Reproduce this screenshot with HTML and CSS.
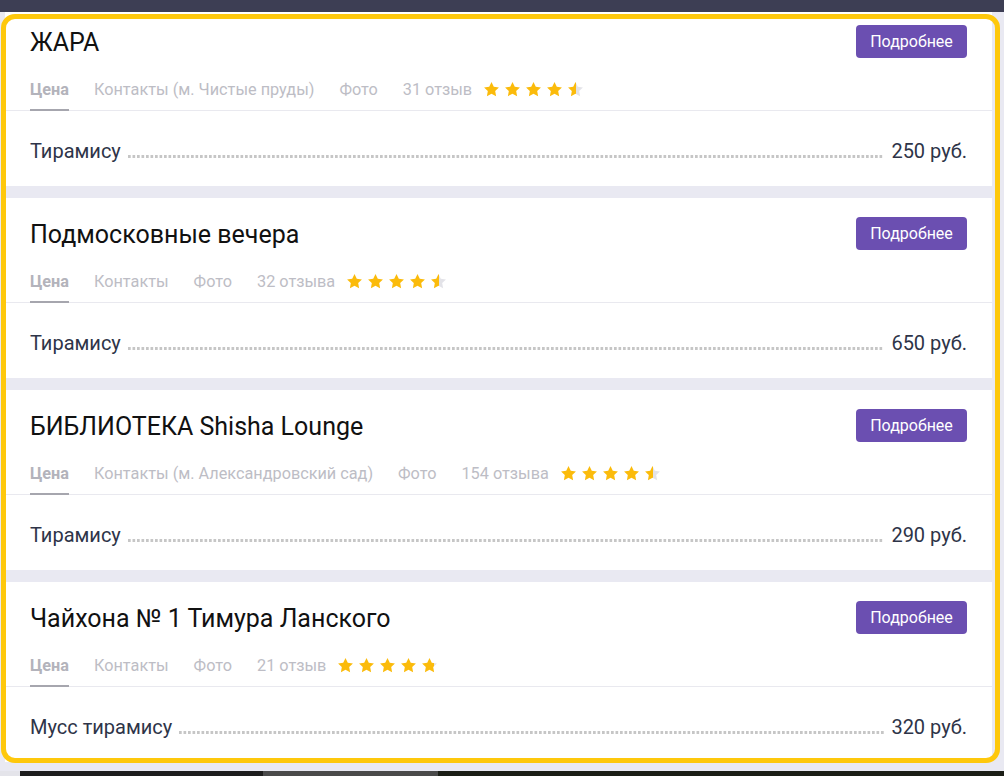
FILE: index.html
```html
<!DOCTYPE html>
<html lang="ru">
<head>
<meta charset="utf-8">
<title>Тирамису</title>
<link rel="stylesheet" href="styles.css">
</head>
<body>
<div class="topbar"></div>
<main class="list">
  <section class="card">
    <div class="head">
      <h2 class="title">ЖАРА</h2>
      <a class="btn" href="#">Подробнее</a>
    </div>
    <nav class="tabs">
      <span class="tab active">Цена</span>
      <span class="tab">Контакты (м. Чистые пруды)</span>
      <span class="tab">Фото</span>
      <span class="tab">31 отзыв</span>
      <span class="stars">
        <svg viewBox="0 0 24 24"><path d="M12 1.5l3.2 6.6 7.3 1-5.3 5.1 1.3 7.2L12 18l-6.5 3.4 1.3-7.2L1.5 9.1l7.3-1z"/></svg>
        <svg viewBox="0 0 24 24"><path d="M12 1.5l3.2 6.6 7.3 1-5.3 5.1 1.3 7.2L12 18l-6.5 3.4 1.3-7.2L1.5 9.1l7.3-1z"/></svg>
        <svg viewBox="0 0 24 24"><path d="M12 1.5l3.2 6.6 7.3 1-5.3 5.1 1.3 7.2L12 18l-6.5 3.4 1.3-7.2L1.5 9.1l7.3-1z"/></svg>
        <svg viewBox="0 0 24 24"><path d="M12 1.5l3.2 6.6 7.3 1-5.3 5.1 1.3 7.2L12 18l-6.5 3.4 1.3-7.2L1.5 9.1l7.3-1z"/></svg>
        <svg viewBox="0 0 24 24"><defs><linearGradient id="h1"><stop offset="0.55" stop-color="#fbbb0b"/><stop offset="0.55" stop-color="#e3e3e8"/></linearGradient></defs><path fill="url(#h1)" d="M12 1.5l3.2 6.6 7.3 1-5.3 5.1 1.3 7.2L12 18l-6.5 3.4 1.3-7.2L1.5 9.1l7.3-1z"/></svg>
      </span>
    </nav>
    <div class="row">
      <span class="dish">Тирамису</span>
      <span class="leader"></span>
      <span class="price">250 руб.</span>
    </div>
  </section>

  <section class="card">
    <div class="head">
      <h2 class="title">Подмосковные вечера</h2>
      <a class="btn" href="#">Подробнее</a>
    </div>
    <nav class="tabs">
      <span class="tab active">Цена</span>
      <span class="tab">Контакты</span>
      <span class="tab">Фото</span>
      <span class="tab">32 отзыва</span>
      <span class="stars">
        <svg viewBox="0 0 24 24"><path d="M12 1.5l3.2 6.6 7.3 1-5.3 5.1 1.3 7.2L12 18l-6.5 3.4 1.3-7.2L1.5 9.1l7.3-1z"/></svg>
        <svg viewBox="0 0 24 24"><path d="M12 1.5l3.2 6.6 7.3 1-5.3 5.1 1.3 7.2L12 18l-6.5 3.4 1.3-7.2L1.5 9.1l7.3-1z"/></svg>
        <svg viewBox="0 0 24 24"><path d="M12 1.5l3.2 6.6 7.3 1-5.3 5.1 1.3 7.2L12 18l-6.5 3.4 1.3-7.2L1.5 9.1l7.3-1z"/></svg>
        <svg viewBox="0 0 24 24"><path d="M12 1.5l3.2 6.6 7.3 1-5.3 5.1 1.3 7.2L12 18l-6.5 3.4 1.3-7.2L1.5 9.1l7.3-1z"/></svg>
        <svg viewBox="0 0 24 24"><defs><linearGradient id="h2"><stop offset="0.55" stop-color="#fbbb0b"/><stop offset="0.55" stop-color="#e3e3e8"/></linearGradient></defs><path fill="url(#h2)" d="M12 1.5l3.2 6.6 7.3 1-5.3 5.1 1.3 7.2L12 18l-6.5 3.4 1.3-7.2L1.5 9.1l7.3-1z"/></svg>
      </span>
    </nav>
    <div class="row">
      <span class="dish">Тирамису</span>
      <span class="leader"></span>
      <span class="price">650 руб.</span>
    </div>
  </section>

  <section class="card">
    <div class="head">
      <h2 class="title">БИБЛИОТЕКА Shisha Lounge</h2>
      <a class="btn" href="#">Подробнее</a>
    </div>
    <nav class="tabs">
      <span class="tab active">Цена</span>
      <span class="tab">Контакты (м. Александровский сад)</span>
      <span class="tab">Фото</span>
      <span class="tab">154 отзыва</span>
      <span class="stars">
        <svg viewBox="0 0 24 24"><path d="M12 1.5l3.2 6.6 7.3 1-5.3 5.1 1.3 7.2L12 18l-6.5 3.4 1.3-7.2L1.5 9.1l7.3-1z"/></svg>
        <svg viewBox="0 0 24 24"><path d="M12 1.5l3.2 6.6 7.3 1-5.3 5.1 1.3 7.2L12 18l-6.5 3.4 1.3-7.2L1.5 9.1l7.3-1z"/></svg>
        <svg viewBox="0 0 24 24"><path d="M12 1.5l3.2 6.6 7.3 1-5.3 5.1 1.3 7.2L12 18l-6.5 3.4 1.3-7.2L1.5 9.1l7.3-1z"/></svg>
        <svg viewBox="0 0 24 24"><path d="M12 1.5l3.2 6.6 7.3 1-5.3 5.1 1.3 7.2L12 18l-6.5 3.4 1.3-7.2L1.5 9.1l7.3-1z"/></svg>
        <svg viewBox="0 0 24 24"><defs><linearGradient id="h3"><stop offset="0.55" stop-color="#fbbb0b"/><stop offset="0.55" stop-color="#e3e3e8"/></linearGradient></defs><path fill="url(#h3)" d="M12 1.5l3.2 6.6 7.3 1-5.3 5.1 1.3 7.2L12 18l-6.5 3.4 1.3-7.2L1.5 9.1l7.3-1z"/></svg>
      </span>
    </nav>
    <div class="row">
      <span class="dish">Тирамису</span>
      <span class="leader"></span>
      <span class="price">290 руб.</span>
    </div>
  </section>

  <section class="card">
    <div class="head">
      <h2 class="title">Чайхона № 1 Тимура Ланского</h2>
      <a class="btn" href="#">Подробнее</a>
    </div>
    <nav class="tabs">
      <span class="tab active">Цена</span>
      <span class="tab">Контакты</span>
      <span class="tab">Фото</span>
      <span class="tab">21 отзыв</span>
      <span class="stars">
        <svg viewBox="0 0 24 24"><path d="M12 1.5l3.2 6.6 7.3 1-5.3 5.1 1.3 7.2L12 18l-6.5 3.4 1.3-7.2L1.5 9.1l7.3-1z"/></svg>
        <svg viewBox="0 0 24 24"><path d="M12 1.5l3.2 6.6 7.3 1-5.3 5.1 1.3 7.2L12 18l-6.5 3.4 1.3-7.2L1.5 9.1l7.3-1z"/></svg>
        <svg viewBox="0 0 24 24"><path d="M12 1.5l3.2 6.6 7.3 1-5.3 5.1 1.3 7.2L12 18l-6.5 3.4 1.3-7.2L1.5 9.1l7.3-1z"/></svg>
        <svg viewBox="0 0 24 24"><path d="M12 1.5l3.2 6.6 7.3 1-5.3 5.1 1.3 7.2L12 18l-6.5 3.4 1.3-7.2L1.5 9.1l7.3-1z"/></svg>
        <svg viewBox="0 0 24 24"><defs><linearGradient id="h4"><stop offset="0.8" stop-color="#fbbb0b"/><stop offset="0.8" stop-color="#e3e3e8"/></linearGradient></defs><path fill="url(#h4)" d="M12 1.5l3.2 6.6 7.3 1-5.3 5.1 1.3 7.2L12 18l-6.5 3.4 1.3-7.2L1.5 9.1l7.3-1z"/></svg>
      </span>
    </nav>
    <div class="row">
      <span class="dish">Мусс тирамису</span>
      <span class="leader"></span>
      <span class="price">320 руб.</span>
    </div>
  </section>
</main>
<div class="frame"></div>
<div class="taskbar">
  <span class="seg seg-light"></span>
  <span class="seg seg-black"></span>
  <span class="seg seg-gray"></span>
  <span class="seg seg-dark"></span>
</div>
</body>
</html>
```
FILE: styles.css
```css
* { box-sizing: border-box; }
html, body { margin: 0; padding: 0; }
body {
  background: #e9e9f2;
  font-family: Roboto, "Noto Sans", "Liberation Sans", sans-serif;
  width: 1004px;
  height: 776px;
  overflow: hidden;
  position: relative;
}
.topbar {
  position: absolute;
  left: 0; top: 0;
  width: 100%;
  height: 12px;
  background: #3d3e54;
  z-index: 2;
}
.list {
  display: flex;
  flex-direction: column;
  gap: 12px;
  padding: 6px 12px 0 5px;
}
.card {
  background: #fff;
  height: 180px;
  display: flex;
  flex-direction: column;
}
.head {
  display: flex;
  justify-content: space-between;
  align-items: center;
  padding: 19px 25px 0 25px;
  height: 52px;
}
.title {
  margin: 0;
  font-size: 25px;
  font-weight: 400;
  color: #111;
  line-height: 30px;
  position: relative;
  top: 1px;
}
.btn {
  display: flex;
  align-items: center;
  justify-content: center;
  width: 111px;
  height: 33px;
  background: #6b4fb1;
  color: #fff;
  border-radius: 4px;
  font-size: 16px;
  text-decoration: none;
}
.tabs {
  display: flex;
  align-items: center;
  gap: 25px;
  margin-top: 20px;
  padding: 0 25px;
  height: 33px;
  border-bottom: 1px solid #e9e9ef;
}
.tab {
  font-size: 16.25px;
  line-height: 19px;
  color: #bdbdc5;
  height: 33px;
  padding-top: 2px;
  border-bottom: 2px solid transparent;
}
.tab.active {
  font-weight: 700;
  color: #b3b3bb;
  border-bottom-color: #a6a6ae;
}
.stars {
  display: flex;
  gap: 4px;
  margin-left: -14px;
  height: 33px;
  padding-top: 3px;
}
.stars svg {
  width: 17px;
  height: 17px;
  fill: #fbbb0b;
}
.row {
  display: flex;
  align-items: flex-end;
  padding: 29px 25px 0 25px;
  height: 52px;
  font-size: 20px;
  line-height: 23px;
  color: #2e3448;
}
.leader {
  flex: 1;
  height: 3px;
  margin: 0 7px 5px 7px;
  background: linear-gradient(to right, #c6c6c6 60%, transparent 60%) repeat-x left top / 4.5px 3px;
}
.frame {
  position: absolute;
  left: 1px;
  top: 14px;
  width: 999px;
  height: 749px;
  border: 5px solid #fec80c;
  border-radius: 14px;
  pointer-events: none;
  z-index: 3;
}
.taskbar {
  position: absolute;
  left: 0;
  bottom: 0;
  width: 100%;
  height: 5px;
  display: flex;
  z-index: 4;
}
.seg { height: 100%; }
.seg-light { width: 20px; background: #e4e4ea; }
.seg-black { width: 243px; background: #1d1d1d; }
.seg-gray { width: 175px; background: #4a4a4a; }
.seg-dark { flex: 1; background: #1b1e16; }
```
